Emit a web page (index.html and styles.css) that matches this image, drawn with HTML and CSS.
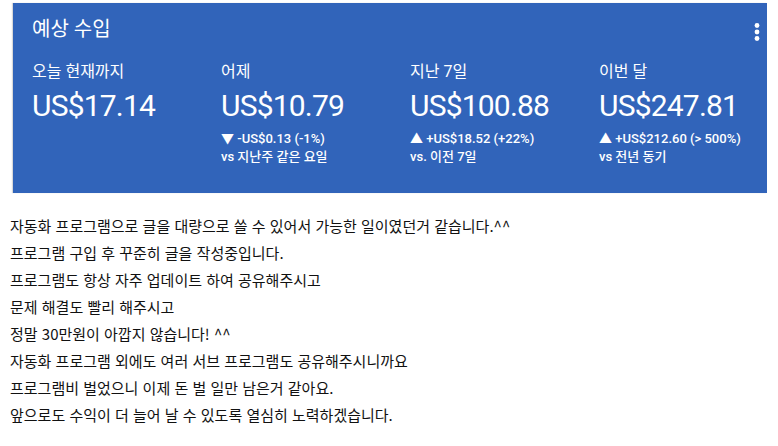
FILE: index.html
```html
<!DOCTYPE html>
<html lang="ko">
<head>
<meta charset="utf-8">
<title>예상 수입</title>
<link rel="stylesheet" href="styles.css">
</head>
<body>
<section class="card">
  <div class="card-head">
    <h2 class="title">예상 수입</h2>
    <svg class="kebab" width="6" height="18" viewBox="0 0 6 18"><circle cx="3" cy="2.5" r="2.4" fill="#fff"/><circle cx="3" cy="9" r="2.4" fill="#fff"/><circle cx="3" cy="15.5" r="2.4" fill="#fff"/></svg>
  </div>
  <div class="stats">
    <div class="stat">
      <div class="label">오늘 현재까지</div>
      <div class="value">US$17.14</div>
    </div>
    <div class="stat">
      <div class="label">어제</div>
      <div class="value">US$10.79</div>
      <div class="delta">▼ -US$0.13 (-1%)</div>
      <div class="delta">vs 지난주 같은 요일</div>
    </div>
    <div class="stat">
      <div class="label">지난 7일</div>
      <div class="value">US$100.88</div>
      <div class="delta">▲ +US$18.52 (+22%)</div>
      <div class="delta">vs. 이전 7일</div>
    </div>
    <div class="stat">
      <div class="label">이번 달</div>
      <div class="value">US$247.81</div>
      <div class="delta">▲ +US$212.60 (&gt; 500%)</div>
      <div class="delta">vs 전년 동기</div>
    </div>
  </div>
</section>
<div class="review">
  <p>자동화 프로그램으로 글을 대량으로 쓸 수 있어서 가능한 일이였던거 같습니다.^^</p>
  <p>프로그램 구입 후 꾸준히 글을 작성중입니다.</p>
  <p>프로그램도 항상 자주 업데이트 하여 공유해주시고</p>
  <p>문제 해결도 빨리 해주시고</p>
  <p>정말 30만원이 아깝지 않습니다! ^^</p>
  <p>자동화 프로그램 외에도 여러 서브 프로그램도 공유해주시니까요</p>
  <p>프로그램비 벌었으니 이제 돈 벌 일만 남은거 같아요.</p>
  <p>앞으로도 수익이 더 늘어 날 수 있도록 열심히 노력하겠습니다.</p>
</div>
</body>
</html>
```
FILE: styles.css
```css
html, body {
  margin: 0;
  padding: 0;
  background: #fff;
}

body {
  font-family: "Noto Sans CJK KR", "Noto Sans", sans-serif;
  color: #111;
}

.card {
  box-sizing: border-box;
  width: 754px;
  height: 190px;
  margin: 3px 0 0 13px;
  padding: 12px 7px 0 19px;
  background: #3164ba;
  color: #fff;
  box-shadow: -1px 0 1px rgba(0, 0, 0, 0.15);
}

.card-head {
  display: flex;
  justify-content: space-between;
  align-items: center;
}

.title {
  margin: 0;
  font-family: Roboto, "Noto Sans CJK KR", sans-serif;
  font-size: 20px;
  font-weight: 400;
  line-height: 28px;
}

.kebab {
  display: block;
  margin-top: 5px;
}

.stats {
  display: grid;
  grid-template-columns: 189px 189px 189px 170px;
  margin-top: 17px;
}

.label {
  font-family: Roboto, "Noto Sans CJK KR", sans-serif;
  font-size: 16px;
  line-height: 24px;
}

.value {
  font-family: Roboto, sans-serif;
  font-size: 30px;
  line-height: 40px;
  letter-spacing: -0.8px;
  margin-top: 2px;
  margin-bottom: 4px;
}

.delta {
  font-family: Roboto, "Noto Sans CJK KR", sans-serif;
  font-size: 13px;
  font-weight: 500;
  line-height: 18px;
}

.review {
  padding: 19px 0 0 10px;
}

.review p {
  margin: 0;
  font-size: 15px;
  line-height: 27px;
}
```
